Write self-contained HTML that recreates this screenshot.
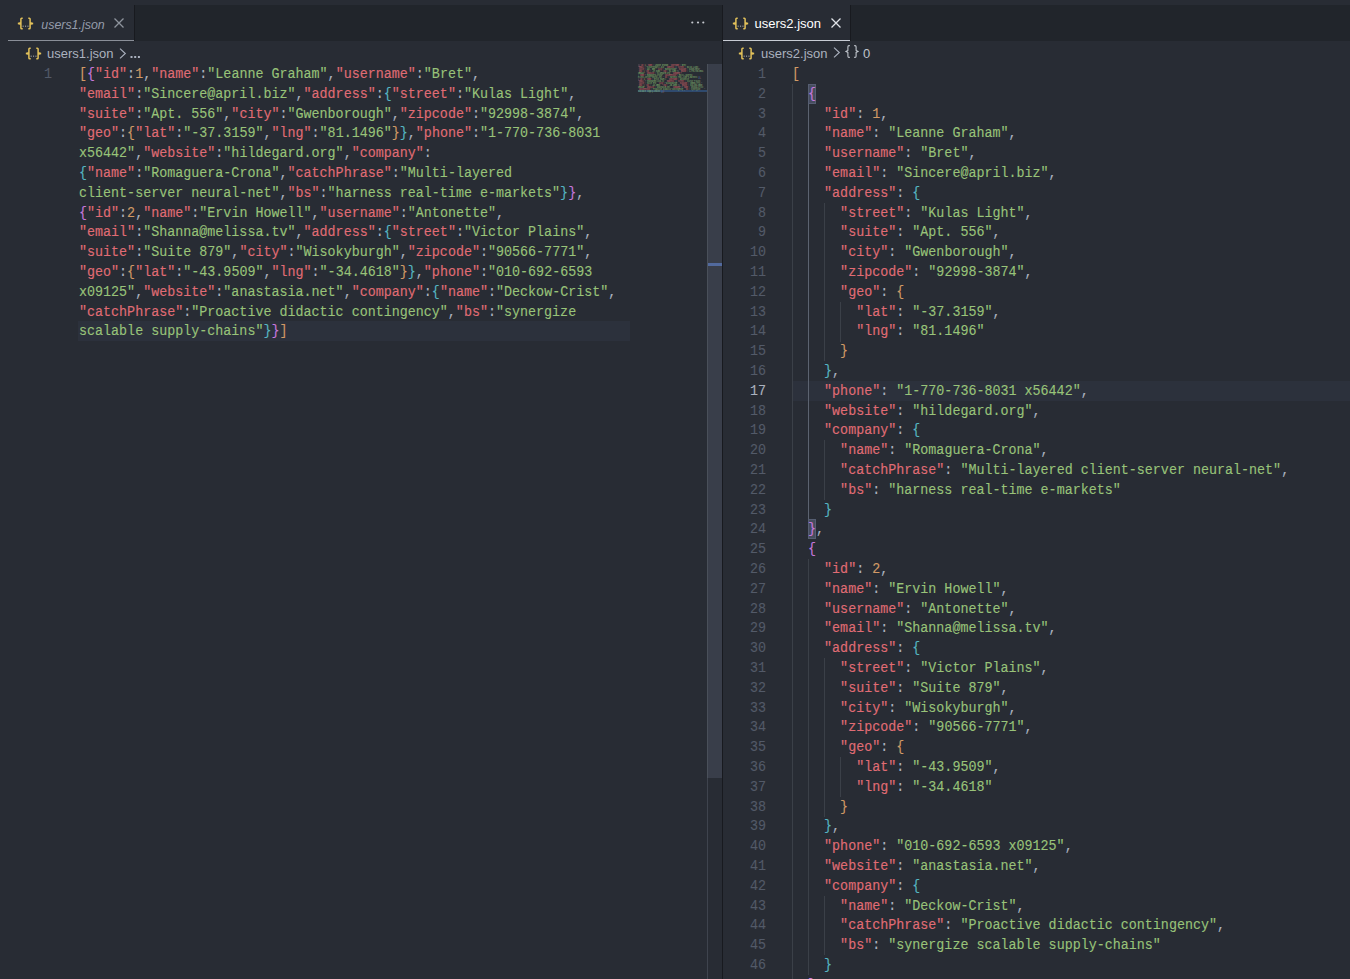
<!DOCTYPE html>
<html><head><meta charset="utf-8">
<style>
html,body{margin:0;padding:0;width:1350px;height:979px;overflow:hidden;background:#282c34;position:relative}
*{box-sizing:border-box}
.abs{position:absolute}
.ln{position:absolute;white-space:pre;font-family:"Liberation Mono",monospace;font-size:14px;line-height:19.8px;height:19.8px;color:#abb2bf;transform:scaleX(0.9544);transform-origin:0 0;-webkit-text-stroke:0.12px currentColor}
.num{position:absolute;white-space:pre;font-family:"Liberation Mono",monospace;font-size:14px;line-height:19.8px;height:19.8px;color:#535a68;text-align:right;width:40px;transform:scaleX(0.9544);transform-origin:100% 0;-webkit-text-stroke:0.12px currentColor}
.mm{position:absolute;height:2px;opacity:.55}
.ig{position:absolute;width:1px}
.ui{position:absolute;white-space:pre;font-family:"Liberation Sans",sans-serif;font-size:13px;line-height:16px}
.ico{position:absolute;width:16px;height:13px;font-family:"Liberation Sans",sans-serif;color:#e5c07b}
.ico .b1{position:absolute;left:0;top:-2px;font-size:14px;line-height:16px}
.ico .b2{position:absolute;right:0;top:-2px;font-size:14px;line-height:16px}
.ico .dots{position:absolute;left:5px;top:2px;font-size:8px;line-height:10px;color:#9aa0a8;letter-spacing:-1px}
</style></head><body>
<!-- tab bars -->
<div class="abs" style="left:134px;top:5px;width:588px;height:36px;background:#21252b"></div>
<div class="abs" style="left:850px;top:5px;width:500px;height:36px;background:#21252b"></div>
<div class="abs" style="left:134px;top:5px;width:1px;height:36px;background:#181a1f"></div>
<div class="abs" style="left:850px;top:5px;width:1px;height:36px;background:#181a1f"></div>
<div class="abs" style="left:8px;top:40px;width:126px;height:1px;background:#8a8f98"></div>
<div class="abs" style="left:723px;top:40px;width:127px;height:1px;background:#c8ccd4"></div>
<!-- divider -->
<div class="abs" style="left:722px;top:5px;width:1px;height:974px;background:#181a1f"></div>

<!-- left tab -->
<svg class="abs" style="left:17px;top:17px" width="18" height="14" viewBox="0 0 18 14"><g fill="none" stroke="#e2c15a" stroke-width="1.5" stroke-linejoin="miter"><path d="M5.7,1.3 H4.7 Q3.9,1.3 3.9,2.1 V5.8 L1,6.5 L3.9,7.2 V10.9 Q3.9,11.7 4.7,11.7 H5.7"/><path d="M11.3,1.3 H12.3 Q13.1,1.3 13.1,2.1 V5.8 L16,6.5 L13.1,7.2 V10.9 Q13.1,11.7 12.3,11.7 H11.3"/></g><g fill="#a0a0a0"><rect x="5.6" y="8.6" width="1.1" height="1.2"/><rect x="8" y="8.6" width="1.1" height="1.2"/><rect x="10.4" y="8.6" width="1.1" height="1.2"/></g></svg>
<div class="ui" style="left:41.3px;top:16.8px;font-style:italic;color:#959cab;font-size:12.4px">users1.json</div>
<svg class="abs" style="left:113.9px;top:17.9px" width="10" height="10" viewBox="0 0 10 10"><g stroke="#8e949d" stroke-width="1.3" stroke-linecap="butt"><path d="M0.5,0.5 L9.5,9.5 M9.5,0.5 L0.5,9.5"/></g></svg>
<svg class="abs" style="left:690px;top:20px" width="16" height="5" viewBox="0 0 16 5"><g fill="#c5c8ce"><circle cx="2.3" cy="2.5" r="1.1"/><circle cx="8" cy="2.5" r="1.1"/><circle cx="13.3" cy="2.5" r="1.1"/></g></svg>

<!-- right tab -->
<svg class="abs" style="left:732px;top:17px" width="18" height="14" viewBox="0 0 18 14"><g fill="none" stroke="#e2c15a" stroke-width="1.5" stroke-linejoin="miter"><path d="M5.7,1.3 H4.7 Q3.9,1.3 3.9,2.1 V5.8 L1,6.5 L3.9,7.2 V10.9 Q3.9,11.7 4.7,11.7 H5.7"/><path d="M11.3,1.3 H12.3 Q13.1,1.3 13.1,2.1 V5.8 L16,6.5 L13.1,7.2 V10.9 Q13.1,11.7 12.3,11.7 H11.3"/></g><g fill="#a0a0a0"><rect x="5.6" y="8.6" width="1.1" height="1.2"/><rect x="8" y="8.6" width="1.1" height="1.2"/><rect x="10.4" y="8.6" width="1.1" height="1.2"/></g></svg>
<div class="ui" style="left:754.5px;top:16px;color:#ffffff">users2.json</div>
<svg class="abs" style="left:830.5px;top:17.8px" width="10" height="10" viewBox="0 0 10 10"><g stroke="#e0e3e8" stroke-width="1.3" stroke-linecap="butt"><path d="M0.5,0.5 L9.5,9.5 M9.5,0.5 L0.5,9.5"/></g></svg>

<!-- breadcrumbs -->
<svg class="abs" style="left:25px;top:47px" width="18" height="14" viewBox="0 0 18 14"><g fill="none" stroke="#e2c15a" stroke-width="1.5" stroke-linejoin="miter"><path d="M5.7,1.3 H4.7 Q3.9,1.3 3.9,2.1 V5.8 L1,6.5 L3.9,7.2 V10.9 Q3.9,11.7 4.7,11.7 H5.7"/><path d="M11.3,1.3 H12.3 Q13.1,1.3 13.1,2.1 V5.8 L16,6.5 L13.1,7.2 V10.9 Q13.1,11.7 12.3,11.7 H11.3"/></g><g fill="#a0a0a0"><rect x="5.6" y="8.6" width="1.1" height="1.2"/><rect x="8" y="8.6" width="1.1" height="1.2"/><rect x="10.4" y="8.6" width="1.1" height="1.2"/></g></svg>
<div class="ui" style="left:47px;top:45.5px;color:#abb2bf">users1.json</div>
<svg class="abs" style="left:118.5px;top:47.5px" width="8" height="11" viewBox="0 0 8 11"><path d="M1,0.7 L6.3,5.5 L1,10.3" fill="none" stroke="#abb2bf" stroke-width="1.1"/></svg>
<svg class="abs" style="left:130px;top:54.5px" width="11" height="4" viewBox="0 0 11 4"><g fill="#abb2bf"><rect x="0.5" y="1" width="2" height="2"/><rect x="4.2" y="1" width="2" height="2"/><rect x="7.9" y="1" width="2" height="2"/></g></svg>

<svg class="abs" style="left:738px;top:47px" width="18" height="14" viewBox="0 0 18 14"><g fill="none" stroke="#e2c15a" stroke-width="1.5" stroke-linejoin="miter"><path d="M5.7,1.3 H4.7 Q3.9,1.3 3.9,2.1 V5.8 L1,6.5 L3.9,7.2 V10.9 Q3.9,11.7 4.7,11.7 H5.7"/><path d="M11.3,1.3 H12.3 Q13.1,1.3 13.1,2.1 V5.8 L16,6.5 L13.1,7.2 V10.9 Q13.1,11.7 12.3,11.7 H11.3"/></g><g fill="#a0a0a0"><rect x="5.6" y="8.6" width="1.1" height="1.2"/><rect x="8" y="8.6" width="1.1" height="1.2"/><rect x="10.4" y="8.6" width="1.1" height="1.2"/></g></svg>
<div class="ui" style="left:761px;top:45.5px;color:#abb2bf">users2.json</div>
<svg class="abs" style="left:832.5px;top:47.2px" width="8" height="11" viewBox="0 0 8 11"><path d="M1,0.7 L6.3,5.5 L1,10.3" fill="none" stroke="#abb2bf" stroke-width="1.1"/></svg>
<svg class="abs" style="left:845px;top:45px" width="14" height="13" viewBox="0 0 14 13"><g fill="none" stroke="#c0c5cc" stroke-width="1.1"><path d="M4.8,0.6 H4 Q2.9,0.6 2.9,1.8 V5.4 L1,6.4 L2.9,7.4 V11.2 Q2.9,12.4 4,12.4 H4.8"/><path d="M9.2,0.6 H10 Q11.1,0.6 11.1,1.8 V5.4 L13,6.4 L11.1,7.4 V11.2 Q11.1,12.4 10,12.4 H9.2"/></g></svg>
<div class="ui" style="left:863px;top:45.5px;color:#c0c5cc">0</div>

<!-- left editor -->
<div class="abs" style="left:78px;top:321.40px;width:552px;height:19.80px;background:#2c313c"></div>
<div class="num" style="left:12px;top:65.0px">1</div>
<div class="ln" style="top:65.00px;left:78.83px"><span style="color:#d19a66">[</span><span style="color:#c678dd">{</span><span style="color:#e06c75">&quot;id&quot;</span><span style="color:#abb2bf">:</span><span style="color:#d19a66">1</span><span style="color:#abb2bf">,</span><span style="color:#e06c75">&quot;name&quot;</span><span style="color:#abb2bf">:</span><span style="color:#98c379">&quot;Leanne Graham&quot;</span><span style="color:#abb2bf">,</span><span style="color:#e06c75">&quot;username&quot;</span><span style="color:#abb2bf">:</span><span style="color:#98c379">&quot;Bret&quot;</span><span style="color:#abb2bf">,</span></div>
<div class="ln" style="top:84.80px;left:78.83px"><span style="color:#e06c75">&quot;email&quot;</span><span style="color:#abb2bf">:</span><span style="color:#98c379">&quot;Sincere@april.biz&quot;</span><span style="color:#abb2bf">,</span><span style="color:#e06c75">&quot;address&quot;</span><span style="color:#abb2bf">:</span><span style="color:#56b6c2">{</span><span style="color:#e06c75">&quot;street&quot;</span><span style="color:#abb2bf">:</span><span style="color:#98c379">&quot;Kulas Light&quot;</span><span style="color:#abb2bf">,</span></div>
<div class="ln" style="top:104.60px;left:78.83px"><span style="color:#e06c75">&quot;suite&quot;</span><span style="color:#abb2bf">:</span><span style="color:#98c379">&quot;Apt. 556&quot;</span><span style="color:#abb2bf">,</span><span style="color:#e06c75">&quot;city&quot;</span><span style="color:#abb2bf">:</span><span style="color:#98c379">&quot;Gwenborough&quot;</span><span style="color:#abb2bf">,</span><span style="color:#e06c75">&quot;zipcode&quot;</span><span style="color:#abb2bf">:</span><span style="color:#98c379">&quot;92998-3874&quot;</span><span style="color:#abb2bf">,</span></div>
<div class="ln" style="top:124.40px;left:78.83px"><span style="color:#e06c75">&quot;geo&quot;</span><span style="color:#abb2bf">:</span><span style="color:#d19a66">{</span><span style="color:#e06c75">&quot;lat&quot;</span><span style="color:#abb2bf">:</span><span style="color:#98c379">&quot;-37.3159&quot;</span><span style="color:#abb2bf">,</span><span style="color:#e06c75">&quot;lng&quot;</span><span style="color:#abb2bf">:</span><span style="color:#98c379">&quot;81.1496&quot;</span><span style="color:#d19a66">}</span><span style="color:#56b6c2">}</span><span style="color:#abb2bf">,</span><span style="color:#e06c75">&quot;phone&quot;</span><span style="color:#abb2bf">:</span><span style="color:#98c379">&quot;1-770-736-8031</span></div>
<div class="ln" style="top:144.20px;left:78.83px"><span style="color:#98c379">x56442&quot;</span><span style="color:#abb2bf">,</span><span style="color:#e06c75">&quot;website&quot;</span><span style="color:#abb2bf">:</span><span style="color:#98c379">&quot;hildegard.org&quot;</span><span style="color:#abb2bf">,</span><span style="color:#e06c75">&quot;company&quot;</span><span style="color:#abb2bf">:</span></div>
<div class="ln" style="top:164.00px;left:78.83px"><span style="color:#56b6c2">{</span><span style="color:#e06c75">&quot;name&quot;</span><span style="color:#abb2bf">:</span><span style="color:#98c379">&quot;Romaguera-Crona&quot;</span><span style="color:#abb2bf">,</span><span style="color:#e06c75">&quot;catchPhrase&quot;</span><span style="color:#abb2bf">:</span><span style="color:#98c379">&quot;Multi-layered</span></div>
<div class="ln" style="top:183.80px;left:78.83px"><span style="color:#98c379">client-server neural-net&quot;</span><span style="color:#abb2bf">,</span><span style="color:#e06c75">&quot;bs&quot;</span><span style="color:#abb2bf">:</span><span style="color:#98c379">&quot;harness real-time e-markets&quot;</span><span style="color:#56b6c2">}</span><span style="color:#c678dd">}</span><span style="color:#abb2bf">,</span></div>
<div class="ln" style="top:203.60px;left:78.83px"><span style="color:#c678dd">{</span><span style="color:#e06c75">&quot;id&quot;</span><span style="color:#abb2bf">:</span><span style="color:#d19a66">2</span><span style="color:#abb2bf">,</span><span style="color:#e06c75">&quot;name&quot;</span><span style="color:#abb2bf">:</span><span style="color:#98c379">&quot;Ervin Howell&quot;</span><span style="color:#abb2bf">,</span><span style="color:#e06c75">&quot;username&quot;</span><span style="color:#abb2bf">:</span><span style="color:#98c379">&quot;Antonette&quot;</span><span style="color:#abb2bf">,</span></div>
<div class="ln" style="top:223.40px;left:78.83px"><span style="color:#e06c75">&quot;email&quot;</span><span style="color:#abb2bf">:</span><span style="color:#98c379">&quot;Shanna@melissa.tv&quot;</span><span style="color:#abb2bf">,</span><span style="color:#e06c75">&quot;address&quot;</span><span style="color:#abb2bf">:</span><span style="color:#56b6c2">{</span><span style="color:#e06c75">&quot;street&quot;</span><span style="color:#abb2bf">:</span><span style="color:#98c379">&quot;Victor Plains&quot;</span><span style="color:#abb2bf">,</span></div>
<div class="ln" style="top:243.20px;left:78.83px"><span style="color:#e06c75">&quot;suite&quot;</span><span style="color:#abb2bf">:</span><span style="color:#98c379">&quot;Suite 879&quot;</span><span style="color:#abb2bf">,</span><span style="color:#e06c75">&quot;city&quot;</span><span style="color:#abb2bf">:</span><span style="color:#98c379">&quot;Wisokyburgh&quot;</span><span style="color:#abb2bf">,</span><span style="color:#e06c75">&quot;zipcode&quot;</span><span style="color:#abb2bf">:</span><span style="color:#98c379">&quot;90566-7771&quot;</span><span style="color:#abb2bf">,</span></div>
<div class="ln" style="top:263.00px;left:78.83px"><span style="color:#e06c75">&quot;geo&quot;</span><span style="color:#abb2bf">:</span><span style="color:#d19a66">{</span><span style="color:#e06c75">&quot;lat&quot;</span><span style="color:#abb2bf">:</span><span style="color:#98c379">&quot;-43.9509&quot;</span><span style="color:#abb2bf">,</span><span style="color:#e06c75">&quot;lng&quot;</span><span style="color:#abb2bf">:</span><span style="color:#98c379">&quot;-34.4618&quot;</span><span style="color:#d19a66">}</span><span style="color:#56b6c2">}</span><span style="color:#abb2bf">,</span><span style="color:#e06c75">&quot;phone&quot;</span><span style="color:#abb2bf">:</span><span style="color:#98c379">&quot;010-692-6593</span></div>
<div class="ln" style="top:282.80px;left:78.83px"><span style="color:#98c379">x09125&quot;</span><span style="color:#abb2bf">,</span><span style="color:#e06c75">&quot;website&quot;</span><span style="color:#abb2bf">:</span><span style="color:#98c379">&quot;anastasia.net&quot;</span><span style="color:#abb2bf">,</span><span style="color:#e06c75">&quot;company&quot;</span><span style="color:#abb2bf">:</span><span style="color:#56b6c2">{</span><span style="color:#e06c75">&quot;name&quot;</span><span style="color:#abb2bf">:</span><span style="color:#98c379">&quot;Deckow-Crist&quot;</span><span style="color:#abb2bf">,</span></div>
<div class="ln" style="top:302.60px;left:78.83px"><span style="color:#e06c75">&quot;catchPhrase&quot;</span><span style="color:#abb2bf">:</span><span style="color:#98c379">&quot;Proactive didactic contingency&quot;</span><span style="color:#abb2bf">,</span><span style="color:#e06c75">&quot;bs&quot;</span><span style="color:#abb2bf">:</span><span style="color:#98c379">&quot;synergize</span></div>
<div class="ln" style="top:322.40px;left:78.83px"><span style="color:#98c379">scalable supply-chains&quot;</span><span style="color:#56b6c2">}</span><span style="color:#c678dd">}</span><span style="color:#d19a66">]</span></div>
<!-- minimap -->
<div class="abs" style="left:638px;top:90px;width:69px;height:2px;background:#2f4a6e"></div>
<div class="abs" style="left:638px;top:64px;width:560px;height:300px;transform:scale(0.125,0.2);transform-origin:0 0;opacity:.75">
<div class="ln" style="top:-1.50px;left:0px;font-weight:bold;line-height:19.8px"><span style="color:#d19a66">[</span><span style="color:#c678dd">{</span><span style="color:#e06c75">&quot;id&quot;</span><span style="color:#abb2bf">:</span><span style="color:#d19a66">1</span><span style="color:#abb2bf">,</span><span style="color:#e06c75">&quot;name&quot;</span><span style="color:#abb2bf">:</span><span style="color:#98c379">&quot;Leanne Graham&quot;</span><span style="color:#abb2bf">,</span><span style="color:#e06c75">&quot;username&quot;</span><span style="color:#abb2bf">:</span><span style="color:#98c379">&quot;Bret&quot;</span><span style="color:#abb2bf">,</span></div>
<div class="ln" style="top:8.50px;left:0px;font-weight:bold;line-height:19.8px"><span style="color:#e06c75">&quot;email&quot;</span><span style="color:#abb2bf">:</span><span style="color:#98c379">&quot;Sincere@april.biz&quot;</span><span style="color:#abb2bf">,</span><span style="color:#e06c75">&quot;address&quot;</span><span style="color:#abb2bf">:</span><span style="color:#56b6c2">{</span><span style="color:#e06c75">&quot;street&quot;</span><span style="color:#abb2bf">:</span><span style="color:#98c379">&quot;Kulas Light&quot;</span><span style="color:#abb2bf">,</span></div>
<div class="ln" style="top:18.50px;left:0px;font-weight:bold;line-height:19.8px"><span style="color:#e06c75">&quot;suite&quot;</span><span style="color:#abb2bf">:</span><span style="color:#98c379">&quot;Apt. 556&quot;</span><span style="color:#abb2bf">,</span><span style="color:#e06c75">&quot;city&quot;</span><span style="color:#abb2bf">:</span><span style="color:#98c379">&quot;Gwenborough&quot;</span><span style="color:#abb2bf">,</span><span style="color:#e06c75">&quot;zipcode&quot;</span><span style="color:#abb2bf">:</span><span style="color:#98c379">&quot;92998-3874&quot;</span><span style="color:#abb2bf">,</span></div>
<div class="ln" style="top:28.50px;left:0px;font-weight:bold;line-height:19.8px"><span style="color:#e06c75">&quot;geo&quot;</span><span style="color:#abb2bf">:</span><span style="color:#d19a66">{</span><span style="color:#e06c75">&quot;lat&quot;</span><span style="color:#abb2bf">:</span><span style="color:#98c379">&quot;-37.3159&quot;</span><span style="color:#abb2bf">,</span><span style="color:#e06c75">&quot;lng&quot;</span><span style="color:#abb2bf">:</span><span style="color:#98c379">&quot;81.1496&quot;</span><span style="color:#d19a66">}</span><span style="color:#56b6c2">}</span><span style="color:#abb2bf">,</span><span style="color:#e06c75">&quot;phone&quot;</span><span style="color:#abb2bf">:</span><span style="color:#98c379">&quot;1-770-736-8031</span></div>
<div class="ln" style="top:38.50px;left:0px;font-weight:bold;line-height:19.8px"><span style="color:#98c379">x56442&quot;</span><span style="color:#abb2bf">,</span><span style="color:#e06c75">&quot;website&quot;</span><span style="color:#abb2bf">:</span><span style="color:#98c379">&quot;hildegard.org&quot;</span><span style="color:#abb2bf">,</span><span style="color:#e06c75">&quot;company&quot;</span><span style="color:#abb2bf">:</span></div>
<div class="ln" style="top:48.50px;left:0px;font-weight:bold;line-height:19.8px"><span style="color:#56b6c2">{</span><span style="color:#e06c75">&quot;name&quot;</span><span style="color:#abb2bf">:</span><span style="color:#98c379">&quot;Romaguera-Crona&quot;</span><span style="color:#abb2bf">,</span><span style="color:#e06c75">&quot;catchPhrase&quot;</span><span style="color:#abb2bf">:</span><span style="color:#98c379">&quot;Multi-layered</span></div>
<div class="ln" style="top:58.50px;left:0px;font-weight:bold;line-height:19.8px"><span style="color:#98c379">client-server neural-net&quot;</span><span style="color:#abb2bf">,</span><span style="color:#e06c75">&quot;bs&quot;</span><span style="color:#abb2bf">:</span><span style="color:#98c379">&quot;harness real-time e-markets&quot;</span><span style="color:#56b6c2">}</span><span style="color:#c678dd">}</span><span style="color:#abb2bf">,</span></div>
<div class="ln" style="top:68.50px;left:0px;font-weight:bold;line-height:19.8px"><span style="color:#c678dd">{</span><span style="color:#e06c75">&quot;id&quot;</span><span style="color:#abb2bf">:</span><span style="color:#d19a66">2</span><span style="color:#abb2bf">,</span><span style="color:#e06c75">&quot;name&quot;</span><span style="color:#abb2bf">:</span><span style="color:#98c379">&quot;Ervin Howell&quot;</span><span style="color:#abb2bf">,</span><span style="color:#e06c75">&quot;username&quot;</span><span style="color:#abb2bf">:</span><span style="color:#98c379">&quot;Antonette&quot;</span><span style="color:#abb2bf">,</span></div>
<div class="ln" style="top:78.50px;left:0px;font-weight:bold;line-height:19.8px"><span style="color:#e06c75">&quot;email&quot;</span><span style="color:#abb2bf">:</span><span style="color:#98c379">&quot;Shanna@melissa.tv&quot;</span><span style="color:#abb2bf">,</span><span style="color:#e06c75">&quot;address&quot;</span><span style="color:#abb2bf">:</span><span style="color:#56b6c2">{</span><span style="color:#e06c75">&quot;street&quot;</span><span style="color:#abb2bf">:</span><span style="color:#98c379">&quot;Victor Plains&quot;</span><span style="color:#abb2bf">,</span></div>
<div class="ln" style="top:88.50px;left:0px;font-weight:bold;line-height:19.8px"><span style="color:#e06c75">&quot;suite&quot;</span><span style="color:#abb2bf">:</span><span style="color:#98c379">&quot;Suite 879&quot;</span><span style="color:#abb2bf">,</span><span style="color:#e06c75">&quot;city&quot;</span><span style="color:#abb2bf">:</span><span style="color:#98c379">&quot;Wisokyburgh&quot;</span><span style="color:#abb2bf">,</span><span style="color:#e06c75">&quot;zipcode&quot;</span><span style="color:#abb2bf">:</span><span style="color:#98c379">&quot;90566-7771&quot;</span><span style="color:#abb2bf">,</span></div>
<div class="ln" style="top:98.50px;left:0px;font-weight:bold;line-height:19.8px"><span style="color:#e06c75">&quot;geo&quot;</span><span style="color:#abb2bf">:</span><span style="color:#d19a66">{</span><span style="color:#e06c75">&quot;lat&quot;</span><span style="color:#abb2bf">:</span><span style="color:#98c379">&quot;-43.9509&quot;</span><span style="color:#abb2bf">,</span><span style="color:#e06c75">&quot;lng&quot;</span><span style="color:#abb2bf">:</span><span style="color:#98c379">&quot;-34.4618&quot;</span><span style="color:#d19a66">}</span><span style="color:#56b6c2">}</span><span style="color:#abb2bf">,</span><span style="color:#e06c75">&quot;phone&quot;</span><span style="color:#abb2bf">:</span><span style="color:#98c379">&quot;010-692-6593</span></div>
<div class="ln" style="top:108.50px;left:0px;font-weight:bold;line-height:19.8px"><span style="color:#98c379">x09125&quot;</span><span style="color:#abb2bf">,</span><span style="color:#e06c75">&quot;website&quot;</span><span style="color:#abb2bf">:</span><span style="color:#98c379">&quot;anastasia.net&quot;</span><span style="color:#abb2bf">,</span><span style="color:#e06c75">&quot;company&quot;</span><span style="color:#abb2bf">:</span><span style="color:#56b6c2">{</span><span style="color:#e06c75">&quot;name&quot;</span><span style="color:#abb2bf">:</span><span style="color:#98c379">&quot;Deckow-Crist&quot;</span><span style="color:#abb2bf">,</span></div>
<div class="ln" style="top:118.50px;left:0px;font-weight:bold;line-height:19.8px"><span style="color:#e06c75">&quot;catchPhrase&quot;</span><span style="color:#abb2bf">:</span><span style="color:#98c379">&quot;Proactive didactic contingency&quot;</span><span style="color:#abb2bf">,</span><span style="color:#e06c75">&quot;bs&quot;</span><span style="color:#abb2bf">:</span><span style="color:#98c379">&quot;synergize</span></div>
<div class="ln" style="top:128.50px;left:0px;font-weight:bold;line-height:19.8px"><span style="color:#98c379">scalable supply-chains&quot;</span><span style="color:#56b6c2">}</span><span style="color:#c678dd">}</span><span style="color:#d19a66">]</span></div>
</div>
<!-- scrollbar -->
<div class="abs" style="left:707px;top:64px;width:1px;height:915px;background:#3f444e"></div>
<div class="abs" style="left:707px;top:64px;width:1px;height:714px;background:#4a505a"></div><div class="abs" style="left:708px;top:64px;width:14px;height:714px;background:#393e4a"></div>
<div class="abs" style="left:708px;top:263px;width:14px;height:2.5px;background:#526a9e"></div>

<!-- right editor -->
<div class="abs" style="left:792px;top:380.80px;width:558px;height:19.80px;background:#2c313c"></div>
<div class="ig" style="left:792px;top:83.80px;height:20.30px;background:#3b4048"></div><div class="ig" style="left:792px;top:103.60px;height:20.30px;background:#3b4048"></div><div class="ig" style="left:808px;top:103.60px;height:20.30px;background:#5c6370"></div><div class="ig" style="left:792px;top:123.40px;height:20.30px;background:#3b4048"></div><div class="ig" style="left:808px;top:123.40px;height:20.30px;background:#5c6370"></div><div class="ig" style="left:792px;top:143.20px;height:20.30px;background:#3b4048"></div><div class="ig" style="left:808px;top:143.20px;height:20.30px;background:#5c6370"></div><div class="ig" style="left:792px;top:163.00px;height:20.30px;background:#3b4048"></div><div class="ig" style="left:808px;top:163.00px;height:20.30px;background:#5c6370"></div><div class="ig" style="left:792px;top:182.80px;height:20.30px;background:#3b4048"></div><div class="ig" style="left:808px;top:182.80px;height:20.30px;background:#5c6370"></div><div class="ig" style="left:792px;top:202.60px;height:20.30px;background:#3b4048"></div><div class="ig" style="left:808px;top:202.60px;height:20.30px;background:#5c6370"></div><div class="ig" style="left:824px;top:202.60px;height:20.30px;background:#3b4048"></div><div class="ig" style="left:792px;top:222.40px;height:20.30px;background:#3b4048"></div><div class="ig" style="left:808px;top:222.40px;height:20.30px;background:#5c6370"></div><div class="ig" style="left:824px;top:222.40px;height:20.30px;background:#3b4048"></div><div class="ig" style="left:792px;top:242.20px;height:20.30px;background:#3b4048"></div><div class="ig" style="left:808px;top:242.20px;height:20.30px;background:#5c6370"></div><div class="ig" style="left:824px;top:242.20px;height:20.30px;background:#3b4048"></div><div class="ig" style="left:792px;top:262.00px;height:20.30px;background:#3b4048"></div><div class="ig" style="left:808px;top:262.00px;height:20.30px;background:#5c6370"></div><div class="ig" style="left:824px;top:262.00px;height:20.30px;background:#3b4048"></div><div class="ig" style="left:792px;top:281.80px;height:20.30px;background:#3b4048"></div><div class="ig" style="left:808px;top:281.80px;height:20.30px;background:#5c6370"></div><div class="ig" style="left:824px;top:281.80px;height:20.30px;background:#3b4048"></div><div class="ig" style="left:792px;top:301.60px;height:20.30px;background:#3b4048"></div><div class="ig" style="left:808px;top:301.60px;height:20.30px;background:#5c6370"></div><div class="ig" style="left:824px;top:301.60px;height:20.30px;background:#3b4048"></div><div class="ig" style="left:840px;top:301.60px;height:20.30px;background:#3b4048"></div><div class="ig" style="left:792px;top:321.40px;height:20.30px;background:#3b4048"></div><div class="ig" style="left:808px;top:321.40px;height:20.30px;background:#5c6370"></div><div class="ig" style="left:824px;top:321.40px;height:20.30px;background:#3b4048"></div><div class="ig" style="left:840px;top:321.40px;height:20.30px;background:#3b4048"></div><div class="ig" style="left:792px;top:341.20px;height:20.30px;background:#3b4048"></div><div class="ig" style="left:808px;top:341.20px;height:20.30px;background:#5c6370"></div><div class="ig" style="left:824px;top:341.20px;height:20.30px;background:#3b4048"></div><div class="ig" style="left:792px;top:361.00px;height:20.30px;background:#3b4048"></div><div class="ig" style="left:808px;top:361.00px;height:20.30px;background:#5c6370"></div><div class="ig" style="left:792px;top:380.80px;height:20.30px;background:#3b4048"></div><div class="ig" style="left:808px;top:380.80px;height:20.30px;background:#5c6370"></div><div class="ig" style="left:792px;top:400.60px;height:20.30px;background:#3b4048"></div><div class="ig" style="left:808px;top:400.60px;height:20.30px;background:#5c6370"></div><div class="ig" style="left:792px;top:420.40px;height:20.30px;background:#3b4048"></div><div class="ig" style="left:808px;top:420.40px;height:20.30px;background:#5c6370"></div><div class="ig" style="left:792px;top:440.20px;height:20.30px;background:#3b4048"></div><div class="ig" style="left:808px;top:440.20px;height:20.30px;background:#5c6370"></div><div class="ig" style="left:824px;top:440.20px;height:20.30px;background:#3b4048"></div><div class="ig" style="left:792px;top:460.00px;height:20.30px;background:#3b4048"></div><div class="ig" style="left:808px;top:460.00px;height:20.30px;background:#5c6370"></div><div class="ig" style="left:824px;top:460.00px;height:20.30px;background:#3b4048"></div><div class="ig" style="left:792px;top:479.80px;height:20.30px;background:#3b4048"></div><div class="ig" style="left:808px;top:479.80px;height:20.30px;background:#5c6370"></div><div class="ig" style="left:824px;top:479.80px;height:20.30px;background:#3b4048"></div><div class="ig" style="left:792px;top:499.60px;height:20.30px;background:#3b4048"></div><div class="ig" style="left:808px;top:499.60px;height:20.30px;background:#5c6370"></div><div class="ig" style="left:792px;top:519.40px;height:20.30px;background:#3b4048"></div><div class="ig" style="left:792px;top:539.20px;height:20.30px;background:#3b4048"></div><div class="ig" style="left:792px;top:559.00px;height:20.30px;background:#3b4048"></div><div class="ig" style="left:808px;top:559.00px;height:20.30px;background:#3b4048"></div><div class="ig" style="left:792px;top:578.80px;height:20.30px;background:#3b4048"></div><div class="ig" style="left:808px;top:578.80px;height:20.30px;background:#3b4048"></div><div class="ig" style="left:792px;top:598.60px;height:20.30px;background:#3b4048"></div><div class="ig" style="left:808px;top:598.60px;height:20.30px;background:#3b4048"></div><div class="ig" style="left:792px;top:618.40px;height:20.30px;background:#3b4048"></div><div class="ig" style="left:808px;top:618.40px;height:20.30px;background:#3b4048"></div><div class="ig" style="left:792px;top:638.20px;height:20.30px;background:#3b4048"></div><div class="ig" style="left:808px;top:638.20px;height:20.30px;background:#3b4048"></div><div class="ig" style="left:792px;top:658.00px;height:20.30px;background:#3b4048"></div><div class="ig" style="left:808px;top:658.00px;height:20.30px;background:#3b4048"></div><div class="ig" style="left:824px;top:658.00px;height:20.30px;background:#3b4048"></div><div class="ig" style="left:792px;top:677.80px;height:20.30px;background:#3b4048"></div><div class="ig" style="left:808px;top:677.80px;height:20.30px;background:#3b4048"></div><div class="ig" style="left:824px;top:677.80px;height:20.30px;background:#3b4048"></div><div class="ig" style="left:792px;top:697.60px;height:20.30px;background:#3b4048"></div><div class="ig" style="left:808px;top:697.60px;height:20.30px;background:#3b4048"></div><div class="ig" style="left:824px;top:697.60px;height:20.30px;background:#3b4048"></div><div class="ig" style="left:792px;top:717.40px;height:20.30px;background:#3b4048"></div><div class="ig" style="left:808px;top:717.40px;height:20.30px;background:#3b4048"></div><div class="ig" style="left:824px;top:717.40px;height:20.30px;background:#3b4048"></div><div class="ig" style="left:792px;top:737.20px;height:20.30px;background:#3b4048"></div><div class="ig" style="left:808px;top:737.20px;height:20.30px;background:#3b4048"></div><div class="ig" style="left:824px;top:737.20px;height:20.30px;background:#3b4048"></div><div class="ig" style="left:792px;top:757.00px;height:20.30px;background:#3b4048"></div><div class="ig" style="left:808px;top:757.00px;height:20.30px;background:#3b4048"></div><div class="ig" style="left:824px;top:757.00px;height:20.30px;background:#3b4048"></div><div class="ig" style="left:840px;top:757.00px;height:20.30px;background:#3b4048"></div><div class="ig" style="left:792px;top:776.80px;height:20.30px;background:#3b4048"></div><div class="ig" style="left:808px;top:776.80px;height:20.30px;background:#3b4048"></div><div class="ig" style="left:824px;top:776.80px;height:20.30px;background:#3b4048"></div><div class="ig" style="left:840px;top:776.80px;height:20.30px;background:#3b4048"></div><div class="ig" style="left:792px;top:796.60px;height:20.30px;background:#3b4048"></div><div class="ig" style="left:808px;top:796.60px;height:20.30px;background:#3b4048"></div><div class="ig" style="left:824px;top:796.60px;height:20.30px;background:#3b4048"></div><div class="ig" style="left:792px;top:816.40px;height:20.30px;background:#3b4048"></div><div class="ig" style="left:808px;top:816.40px;height:20.30px;background:#3b4048"></div><div class="ig" style="left:792px;top:836.20px;height:20.30px;background:#3b4048"></div><div class="ig" style="left:808px;top:836.20px;height:20.30px;background:#3b4048"></div><div class="ig" style="left:792px;top:856.00px;height:20.30px;background:#3b4048"></div><div class="ig" style="left:808px;top:856.00px;height:20.30px;background:#3b4048"></div><div class="ig" style="left:792px;top:875.80px;height:20.30px;background:#3b4048"></div><div class="ig" style="left:808px;top:875.80px;height:20.30px;background:#3b4048"></div><div class="ig" style="left:792px;top:895.60px;height:20.30px;background:#3b4048"></div><div class="ig" style="left:808px;top:895.60px;height:20.30px;background:#3b4048"></div><div class="ig" style="left:824px;top:895.60px;height:20.30px;background:#3b4048"></div><div class="ig" style="left:792px;top:915.40px;height:20.30px;background:#3b4048"></div><div class="ig" style="left:808px;top:915.40px;height:20.30px;background:#3b4048"></div><div class="ig" style="left:824px;top:915.40px;height:20.30px;background:#3b4048"></div><div class="ig" style="left:792px;top:935.20px;height:20.30px;background:#3b4048"></div><div class="ig" style="left:808px;top:935.20px;height:20.30px;background:#3b4048"></div><div class="ig" style="left:824px;top:935.20px;height:20.30px;background:#3b4048"></div><div class="ig" style="left:792px;top:955.00px;height:20.30px;background:#3b4048"></div><div class="ig" style="left:808px;top:955.00px;height:20.30px;background:#3b4048"></div><div class="ig" style="left:792px;top:974.80px;height:20.30px;background:#3b4048"></div>
<div class="abs" style="left:808px;top:83.80px;width:8px;height:19.80px;background:#464c5e;border:1px solid #565e72"></div>
<div class="abs" style="left:808px;top:519.40px;width:8px;height:19.80px;background:#464c5e;border:1px solid #565e72"></div>
<div class="num" style="left:726px;top:65.00px;">1</div><div class="num" style="left:726px;top:84.80px;">2</div><div class="num" style="left:726px;top:104.60px;">3</div><div class="num" style="left:726px;top:124.40px;">4</div><div class="num" style="left:726px;top:144.20px;">5</div><div class="num" style="left:726px;top:164.00px;">6</div><div class="num" style="left:726px;top:183.80px;">7</div><div class="num" style="left:726px;top:203.60px;">8</div><div class="num" style="left:726px;top:223.40px;">9</div><div class="num" style="left:726px;top:243.20px;">10</div><div class="num" style="left:726px;top:263.00px;">11</div><div class="num" style="left:726px;top:282.80px;">12</div><div class="num" style="left:726px;top:302.60px;">13</div><div class="num" style="left:726px;top:322.40px;">14</div><div class="num" style="left:726px;top:342.20px;">15</div><div class="num" style="left:726px;top:362.00px;">16</div><div class="num" style="left:726px;top:381.80px;color:#abb2bf">17</div><div class="num" style="left:726px;top:401.60px;">18</div><div class="num" style="left:726px;top:421.40px;">19</div><div class="num" style="left:726px;top:441.20px;">20</div><div class="num" style="left:726px;top:461.00px;">21</div><div class="num" style="left:726px;top:480.80px;">22</div><div class="num" style="left:726px;top:500.60px;">23</div><div class="num" style="left:726px;top:520.40px;">24</div><div class="num" style="left:726px;top:540.20px;">25</div><div class="num" style="left:726px;top:560.00px;">26</div><div class="num" style="left:726px;top:579.80px;">27</div><div class="num" style="left:726px;top:599.60px;">28</div><div class="num" style="left:726px;top:619.40px;">29</div><div class="num" style="left:726px;top:639.20px;">30</div><div class="num" style="left:726px;top:659.00px;">31</div><div class="num" style="left:726px;top:678.80px;">32</div><div class="num" style="left:726px;top:698.60px;">33</div><div class="num" style="left:726px;top:718.40px;">34</div><div class="num" style="left:726px;top:738.20px;">35</div><div class="num" style="left:726px;top:758.00px;">36</div><div class="num" style="left:726px;top:777.80px;">37</div><div class="num" style="left:726px;top:797.60px;">38</div><div class="num" style="left:726px;top:817.40px;">39</div><div class="num" style="left:726px;top:837.20px;">40</div><div class="num" style="left:726px;top:857.00px;">41</div><div class="num" style="left:726px;top:876.80px;">42</div><div class="num" style="left:726px;top:896.60px;">43</div><div class="num" style="left:726px;top:916.40px;">44</div><div class="num" style="left:726px;top:936.20px;">45</div><div class="num" style="left:726px;top:956.00px;">46</div><div class="num" style="left:726px;top:975.80px;">47</div><div class="num" style="left:726px;top:995.60px;">48</div>
<div class="ln" style="top:65.00px;left:791.9px"><span style="color:#d19a66">[</span></div>
<div class="ln" style="top:84.80px;left:791.9px">  <span style="color:#c678dd">{</span></div>
<div class="ln" style="top:104.60px;left:791.9px">    <span style="color:#e06c75">&quot;id&quot;</span><span style="color:#abb2bf">:</span> <span style="color:#d19a66">1</span><span style="color:#abb2bf">,</span></div>
<div class="ln" style="top:124.40px;left:791.9px">    <span style="color:#e06c75">&quot;name&quot;</span><span style="color:#abb2bf">:</span> <span style="color:#98c379">&quot;Leanne Graham&quot;</span><span style="color:#abb2bf">,</span></div>
<div class="ln" style="top:144.20px;left:791.9px">    <span style="color:#e06c75">&quot;username&quot;</span><span style="color:#abb2bf">:</span> <span style="color:#98c379">&quot;Bret&quot;</span><span style="color:#abb2bf">,</span></div>
<div class="ln" style="top:164.00px;left:791.9px">    <span style="color:#e06c75">&quot;email&quot;</span><span style="color:#abb2bf">:</span> <span style="color:#98c379">&quot;Sincere@april.biz&quot;</span><span style="color:#abb2bf">,</span></div>
<div class="ln" style="top:183.80px;left:791.9px">    <span style="color:#e06c75">&quot;address&quot;</span><span style="color:#abb2bf">:</span> <span style="color:#56b6c2">{</span></div>
<div class="ln" style="top:203.60px;left:791.9px">      <span style="color:#e06c75">&quot;street&quot;</span><span style="color:#abb2bf">:</span> <span style="color:#98c379">&quot;Kulas Light&quot;</span><span style="color:#abb2bf">,</span></div>
<div class="ln" style="top:223.40px;left:791.9px">      <span style="color:#e06c75">&quot;suite&quot;</span><span style="color:#abb2bf">:</span> <span style="color:#98c379">&quot;Apt. 556&quot;</span><span style="color:#abb2bf">,</span></div>
<div class="ln" style="top:243.20px;left:791.9px">      <span style="color:#e06c75">&quot;city&quot;</span><span style="color:#abb2bf">:</span> <span style="color:#98c379">&quot;Gwenborough&quot;</span><span style="color:#abb2bf">,</span></div>
<div class="ln" style="top:263.00px;left:791.9px">      <span style="color:#e06c75">&quot;zipcode&quot;</span><span style="color:#abb2bf">:</span> <span style="color:#98c379">&quot;92998-3874&quot;</span><span style="color:#abb2bf">,</span></div>
<div class="ln" style="top:282.80px;left:791.9px">      <span style="color:#e06c75">&quot;geo&quot;</span><span style="color:#abb2bf">:</span> <span style="color:#d19a66">{</span></div>
<div class="ln" style="top:302.60px;left:791.9px">        <span style="color:#e06c75">&quot;lat&quot;</span><span style="color:#abb2bf">:</span> <span style="color:#98c379">&quot;-37.3159&quot;</span><span style="color:#abb2bf">,</span></div>
<div class="ln" style="top:322.40px;left:791.9px">        <span style="color:#e06c75">&quot;lng&quot;</span><span style="color:#abb2bf">:</span> <span style="color:#98c379">&quot;81.1496&quot;</span></div>
<div class="ln" style="top:342.20px;left:791.9px">      <span style="color:#d19a66">}</span></div>
<div class="ln" style="top:362.00px;left:791.9px">    <span style="color:#56b6c2">}</span><span style="color:#abb2bf">,</span></div>
<div class="ln" style="top:381.80px;left:791.9px">    <span style="color:#e06c75">&quot;phone&quot;</span><span style="color:#abb2bf">:</span> <span style="color:#98c379">&quot;1-770-736-8031 x56442&quot;</span><span style="color:#abb2bf">,</span></div>
<div class="ln" style="top:401.60px;left:791.9px">    <span style="color:#e06c75">&quot;website&quot;</span><span style="color:#abb2bf">:</span> <span style="color:#98c379">&quot;hildegard.org&quot;</span><span style="color:#abb2bf">,</span></div>
<div class="ln" style="top:421.40px;left:791.9px">    <span style="color:#e06c75">&quot;company&quot;</span><span style="color:#abb2bf">:</span> <span style="color:#56b6c2">{</span></div>
<div class="ln" style="top:441.20px;left:791.9px">      <span style="color:#e06c75">&quot;name&quot;</span><span style="color:#abb2bf">:</span> <span style="color:#98c379">&quot;Romaguera-Crona&quot;</span><span style="color:#abb2bf">,</span></div>
<div class="ln" style="top:461.00px;left:791.9px">      <span style="color:#e06c75">&quot;catchPhrase&quot;</span><span style="color:#abb2bf">:</span> <span style="color:#98c379">&quot;Multi-layered client-server neural-net&quot;</span><span style="color:#abb2bf">,</span></div>
<div class="ln" style="top:480.80px;left:791.9px">      <span style="color:#e06c75">&quot;bs&quot;</span><span style="color:#abb2bf">:</span> <span style="color:#98c379">&quot;harness real-time e-markets&quot;</span></div>
<div class="ln" style="top:500.60px;left:791.9px">    <span style="color:#56b6c2">}</span></div>
<div class="ln" style="top:520.40px;left:791.9px">  <span style="color:#c678dd">}</span><span style="color:#abb2bf">,</span></div>
<div class="ln" style="top:540.20px;left:791.9px">  <span style="color:#c678dd">{</span></div>
<div class="ln" style="top:560.00px;left:791.9px">    <span style="color:#e06c75">&quot;id&quot;</span><span style="color:#abb2bf">:</span> <span style="color:#d19a66">2</span><span style="color:#abb2bf">,</span></div>
<div class="ln" style="top:579.80px;left:791.9px">    <span style="color:#e06c75">&quot;name&quot;</span><span style="color:#abb2bf">:</span> <span style="color:#98c379">&quot;Ervin Howell&quot;</span><span style="color:#abb2bf">,</span></div>
<div class="ln" style="top:599.60px;left:791.9px">    <span style="color:#e06c75">&quot;username&quot;</span><span style="color:#abb2bf">:</span> <span style="color:#98c379">&quot;Antonette&quot;</span><span style="color:#abb2bf">,</span></div>
<div class="ln" style="top:619.40px;left:791.9px">    <span style="color:#e06c75">&quot;email&quot;</span><span style="color:#abb2bf">:</span> <span style="color:#98c379">&quot;Shanna@melissa.tv&quot;</span><span style="color:#abb2bf">,</span></div>
<div class="ln" style="top:639.20px;left:791.9px">    <span style="color:#e06c75">&quot;address&quot;</span><span style="color:#abb2bf">:</span> <span style="color:#56b6c2">{</span></div>
<div class="ln" style="top:659.00px;left:791.9px">      <span style="color:#e06c75">&quot;street&quot;</span><span style="color:#abb2bf">:</span> <span style="color:#98c379">&quot;Victor Plains&quot;</span><span style="color:#abb2bf">,</span></div>
<div class="ln" style="top:678.80px;left:791.9px">      <span style="color:#e06c75">&quot;suite&quot;</span><span style="color:#abb2bf">:</span> <span style="color:#98c379">&quot;Suite 879&quot;</span><span style="color:#abb2bf">,</span></div>
<div class="ln" style="top:698.60px;left:791.9px">      <span style="color:#e06c75">&quot;city&quot;</span><span style="color:#abb2bf">:</span> <span style="color:#98c379">&quot;Wisokyburgh&quot;</span><span style="color:#abb2bf">,</span></div>
<div class="ln" style="top:718.40px;left:791.9px">      <span style="color:#e06c75">&quot;zipcode&quot;</span><span style="color:#abb2bf">:</span> <span style="color:#98c379">&quot;90566-7771&quot;</span><span style="color:#abb2bf">,</span></div>
<div class="ln" style="top:738.20px;left:791.9px">      <span style="color:#e06c75">&quot;geo&quot;</span><span style="color:#abb2bf">:</span> <span style="color:#d19a66">{</span></div>
<div class="ln" style="top:758.00px;left:791.9px">        <span style="color:#e06c75">&quot;lat&quot;</span><span style="color:#abb2bf">:</span> <span style="color:#98c379">&quot;-43.9509&quot;</span><span style="color:#abb2bf">,</span></div>
<div class="ln" style="top:777.80px;left:791.9px">        <span style="color:#e06c75">&quot;lng&quot;</span><span style="color:#abb2bf">:</span> <span style="color:#98c379">&quot;-34.4618&quot;</span></div>
<div class="ln" style="top:797.60px;left:791.9px">      <span style="color:#d19a66">}</span></div>
<div class="ln" style="top:817.40px;left:791.9px">    <span style="color:#56b6c2">}</span><span style="color:#abb2bf">,</span></div>
<div class="ln" style="top:837.20px;left:791.9px">    <span style="color:#e06c75">&quot;phone&quot;</span><span style="color:#abb2bf">:</span> <span style="color:#98c379">&quot;010-692-6593 x09125&quot;</span><span style="color:#abb2bf">,</span></div>
<div class="ln" style="top:857.00px;left:791.9px">    <span style="color:#e06c75">&quot;website&quot;</span><span style="color:#abb2bf">:</span> <span style="color:#98c379">&quot;anastasia.net&quot;</span><span style="color:#abb2bf">,</span></div>
<div class="ln" style="top:876.80px;left:791.9px">    <span style="color:#e06c75">&quot;company&quot;</span><span style="color:#abb2bf">:</span> <span style="color:#56b6c2">{</span></div>
<div class="ln" style="top:896.60px;left:791.9px">      <span style="color:#e06c75">&quot;name&quot;</span><span style="color:#abb2bf">:</span> <span style="color:#98c379">&quot;Deckow-Crist&quot;</span><span style="color:#abb2bf">,</span></div>
<div class="ln" style="top:916.40px;left:791.9px">      <span style="color:#e06c75">&quot;catchPhrase&quot;</span><span style="color:#abb2bf">:</span> <span style="color:#98c379">&quot;Proactive didactic contingency&quot;</span><span style="color:#abb2bf">,</span></div>
<div class="ln" style="top:936.20px;left:791.9px">      <span style="color:#e06c75">&quot;bs&quot;</span><span style="color:#abb2bf">:</span> <span style="color:#98c379">&quot;synergize scalable supply-chains&quot;</span></div>
<div class="ln" style="top:956.00px;left:791.9px">    <span style="color:#56b6c2">}</span></div>
<div class="ln" style="top:975.80px;left:791.9px">  <span style="color:#c678dd">}</span></div>
<div class="ln" style="top:995.60px;left:791.9px"><span style="color:#d19a66">]</span></div>
</body></html>
